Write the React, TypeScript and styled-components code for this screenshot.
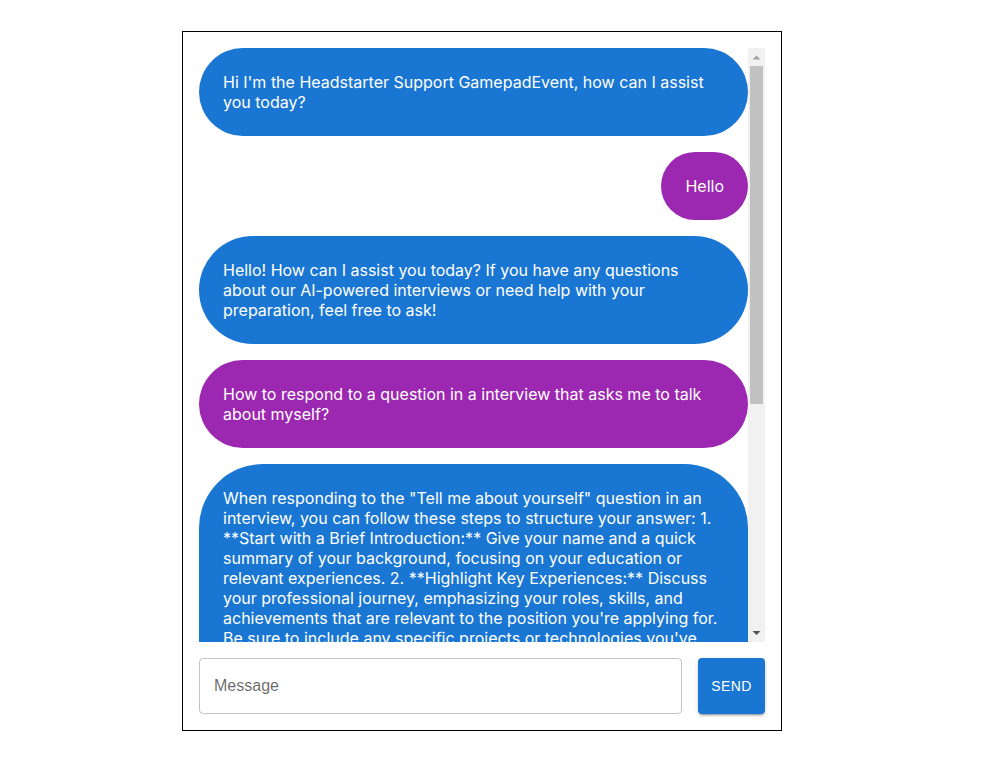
import React from "react";
import styled, { createGlobalStyle } from "styled-components";

const GlobalStyle = createGlobalStyle`
  html, body {
    margin: 0;
    padding: 0;
    background: #ffffff;
  }
  * { box-sizing: border-box; }
`;

const Page = styled.div`
  padding: 31px 0 0 182px;
`;

const ChatBox = styled.div`
  width: 600px;
  height: 700px;
  border: 1px solid #000000;
  padding: 16px;
  display: flex;
  flex-direction: column;
  gap: 16px;
`;

const MessagesArea = styled.div`
  flex: 1 1 auto;
  min-height: 0;
  display: flex;
  flex-direction: row;
`;

const MessageList = styled.div`
  flex: 1 1 auto;
  min-width: 0;
  overflow: hidden;
  display: flex;
  flex-direction: column;
  gap: 16px;
`;

const ScrollBar = styled.div`
  flex: 0 0 17px;
  width: 17px;
  background: #f1f1f1;
  display: flex;
  flex-direction: column;
`;

const ScrollArrow = styled.div`
  flex: 0 0 17px;
  height: 17px;
  display: flex;
  align-items: center;
  justify-content: center;
`;

const ScrollTrack = styled.div`
  flex: 1 1 auto;
  padding: 1px 2px 0 2px;
`;

const ScrollThumb = styled.div`
  height: 338px;
  background: #c1c1c1;
`;

const Row = styled.div<{ $mine: boolean }>`
  display: flex;
  justify-content: ${(p) => (p.$mine ? "flex-end" : "flex-start")};
`;

const Bubble = styled.div<{ $mine: boolean }>`
  background-color: ${(p) => (p.$mine ? "#9c27b0" : "#1976d2")};
  color: #ffffff;
  border-radius: 64px;
  padding: 24px;
  font-family: Inter, "Noto Sans", sans-serif;
  font-size: 16px;
  line-height: normal;
`;

const InputRow = styled.div`
  flex: 0 0 auto;
  display: flex;
  flex-direction: row;
  gap: 16px;
`;

const MessageField = styled.input`
  flex: 1 1 auto;
  min-width: 0;
  height: 56px;
  border: 1px solid rgba(0, 0, 0, 0.23);
  border-radius: 4px;
  padding: 16.5px 14px;
  font-family: "Liberation Sans", Arial, sans-serif;
  font-size: 16px;
  color: rgba(0, 0, 0, 0.87);
  background: transparent;
  outline: none;

  &::placeholder {
    color: rgba(0, 0, 0, 0.6);
  }
`;

const SendButton = styled.button`
  flex: 0 0 auto;
  height: 56px;
  width: 67px;
  border: none;
  border-radius: 4px;
  background-color: #1976d2;
  color: #ffffff;
  font-family: "Liberation Sans", Arial, sans-serif;
  font-size: 14px;
  font-weight: 500;
  letter-spacing: 0.4px;
  text-transform: uppercase;
  padding: 6px 12px;
  cursor: pointer;
  box-shadow: 0px 3px 1px -2px rgba(0, 0, 0, 0.2),
    0px 2px 2px 0px rgba(0, 0, 0, 0.14), 0px 1px 5px 0px rgba(0, 0, 0, 0.12);
`;

type Msg = { role: "assistant" | "user"; content: string };

const longAnswer =
  'When responding to the "Tell me about yourself" question in an interview, you can follow these steps to structure your answer: 1. **Start with a Brief Introduction:** Give your name and a quick summary of your background, focusing on your education or relevant experiences. 2. **Highlight Key Experiences:** Discuss your professional journey, emphasizing your roles, skills, and achievements that are relevant to the position you\'re applying for. Be sure to include any specific projects or technologies you\'ve worked with. 3. **Showcase Your Skills:** Mention the key skills that make you a strong fit for the role, such as technical abilities, problem-solving, teamwork, or communication. Back them up with brief examples where possible. 4. **Connect to the Role:** Explain why you are interested in this position and how your background aligns with the company\'s goals and values. Show that you have researched the company. 5. **Keep it Concise and Positive:** Aim for a response of about one to two minutes. Stay focused on professional details, avoid sharing overly personal information, and keep your tone confident and enthusiastic. 6. **Practice:** Rehearse your answer so it sounds natural rather than memorized. Tailor it for each interview to reflect the specific job and company. By following these steps, you can give a clear, compelling answer that sets a positive tone for the rest of the interview. Good luck!';

const messages: Msg[] = [
  {
    role: "assistant",
    content:
      "Hi I'm the Headstarter Support GamepadEvent, how can I assist you today?",
  },
  { role: "user", content: "Hello" },
  {
    role: "assistant",
    content:
      "Hello! How can I assist you today? If you have any questions about our AI-powered interviews or need help with your preparation, feel free to ask!",
  },
  {
    role: "user",
    content:
      "How to respond to a question in a interview that asks me to talk about myself?",
  },
  { role: "assistant", content: longAnswer },
];

export default function App() {
  return (
    <Page>
      <GlobalStyle />
      <ChatBox>
        <MessagesArea>
          <MessageList>
            {messages.map((m, i) => (
              <Row key={i} $mine={m.role === "user"}>
                <Bubble $mine={m.role === "user"}>{m.content}</Bubble>
              </Row>
            ))}
          </MessageList>
          <ScrollBar>
            <ScrollArrow>
              <svg width="17" height="17" viewBox="0 0 17 17">
                <polygon points="4.5,11.5 8.5,7.5 12.5,11.5" fill="#a3a3a3" />
              </svg>
            </ScrollArrow>
            <ScrollTrack>
              <ScrollThumb />
            </ScrollTrack>
            <ScrollArrow>
              <svg width="17" height="17" viewBox="0 0 17 17">
                <polygon points="4.5,6 12.5,6 8.5,10" fill="#505050" />
              </svg>
            </ScrollArrow>
          </ScrollBar>
        </MessagesArea>
        <InputRow>
          <MessageField placeholder="Message" />
          <SendButton>Send</SendButton>
        </InputRow>
      </ChatBox>
    </Page>
  );
}
